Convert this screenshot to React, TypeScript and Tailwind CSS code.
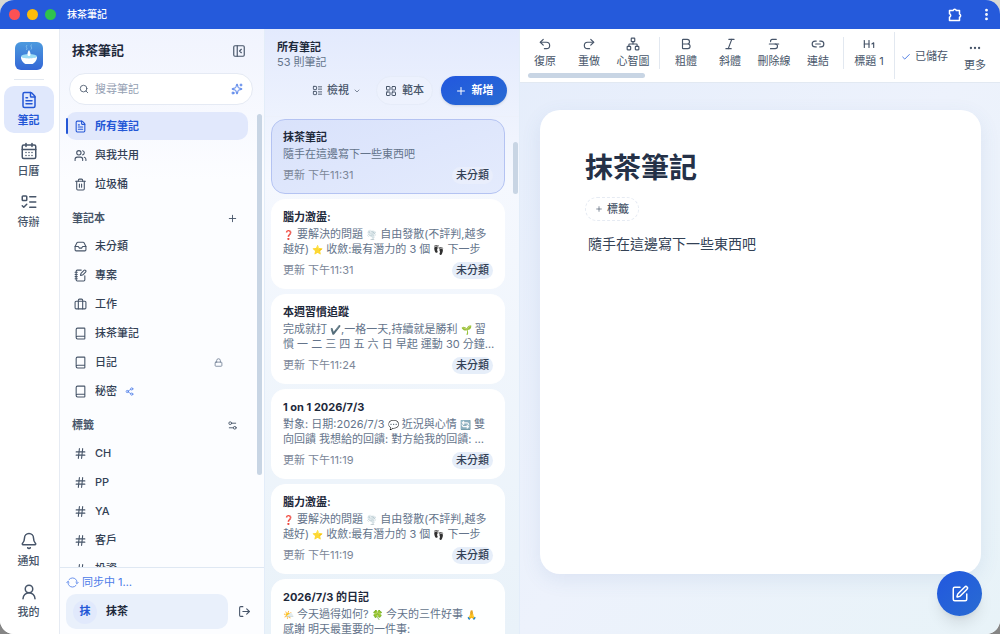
import {
  Bell, Bold, Book, Briefcase, CalendarDays, Check, ChevronDown, Ellipsis, EllipsisVertical, FileText,
  Hash, Heading1, Inbox, Italic, LayoutGrid, LayoutList, Link2, ListTodo, Lock, LogOut, Network,
  NotebookPen, PanelLeftClose, Plus, Redo2, Search, Settings2, Share2, Sparkles, SquarePen,
  Strikethrough, Trash2, Undo2, UserRound, Users,
} from 'lucide-react'
import { IoSyncOutline } from 'react-icons/io5'

type Note = { title: string, lines: string[], time: string, active?: boolean }

const brainstorm = [
  '❓ 要解決的問題 🌪️ 自由發散(不評判,越多',
  '越好) ⭐ 收斂:最有潛力的 3 個 👣 下一步',
]

const notes: Note[] = [
  { title: '抹茶筆記', lines: ['隨手在這邊寫下一些東西吧'], time: '下午11:31', active: true },
  { title: '腦力激盪:', lines: brainstorm, time: '下午11:31' },
  { title: '本週習慣追蹤', lines: ['完成就打 ✔️,一格一天,持續就是勝利 🌱 習', '慣 一 二 三 四 五 六 日 早起 運動 30 分鐘…'], time: '下午11:24' },
  { title: '1 on 1 2026/7/3', lines: ['對象: 日期:2026/7/3 💬 近況與心情 🔄 雙', '向回饋 我想給的回饋: 對方給我的回饋: …'], time: '下午11:19' },
  { title: '腦力激盪:', lines: brainstorm, time: '下午11:19' },
  { title: '2026/7/3 的日記', lines: ['🌤️ 今天過得如何? 🍀 今天的三件好事 🙏', '感謝 明天最重要的一件事:'], time: '下午11:10' },
]

const emojiPattern = /(\p{Extended_Pictographic}\uFE0F?)/u

// Emoji glyphs run larger than the text, so they get a smaller size
function EmojiText({ text }: { text: string }) {
  return (
    <>
      {text.split(emojiPattern).map((part, i) => {
        if (i % 2 === 0) return part
        const dark = part === '👣'
        return <span key={i} className={dark ? 'inline-block text-[9px] brightness-50 grayscale' : 'text-[9px]'}>{part}</span>
      })}
    </>
  )
}

function PuzzleIcon() {
  return (
    <svg width="16" height="16" viewBox="0 0 16 16" fill="none" stroke="currentColor" strokeWidth="1.5" strokeLinejoin="round">
      <path d="M2.500 3.500h3.600a1.700 1.700 0 0 1 3.200 0h3.200v3.600a1.700 1.700 0 0 1 0 3.200v3.200h-10v-3.300a1.800 1.800 0 0 0 0-3.400z" />
    </svg>
  )
}

function Logo() {
  return (
    <svg width="28" height="28" viewBox="0 0 28 28" className="shrink-0">
      <defs>
        <linearGradient id="logo" x1="0" y1="0" x2="0" y2="1">
          <stop offset="0" stopColor="#4c9ade" />
          <stop offset="1" stopColor="#3467d6" />
        </linearGradient>
      </defs>
      <rect width="28" height="28" rx="6" fill="url(#logo)" />
      <path d="M12 3c-2 2 1 3-.5 5M16.500 2.500c-2 2 1.500 3-.5 5" stroke="#8cc4ee" strokeWidth=".8" fill="none" />
      <ellipse cx="14" cy="14.500" rx="8" ry="2.500" fill="#9bdcf5" />
      <path d="M6 14.500c1 2.500 15 2.500 16 0 .3 3.500-2 6-4.500 7.500h-7C8 20.500 5.700 18 6 14.500z" fill="#fff" />
      <path d="M14 8c1 1.500 1.600 2.800 1.500 4.500a1.500 1.500 0 0 1-3 0c-.1-1.700.5-3 1.500-4.500z" fill="#fff" />
    </svg>
  )
}

function RailButton({ icon: Icon, label, active }: { icon: any, label: string, active?: boolean }) {
  return (
    <button
      className={`flex h-[47px] w-[50px] flex-col items-center justify-center gap-[3px] rounded-[10px] text-[11px] leading-[16px] ${active
          ? 'bg-[#e0e8fc] font-bold text-[#2457d6]'
          : 'font-medium text-[#475569]'
        }`}
    >
      <Icon size={18} strokeWidth={2} />
      {label}
    </button>
  )
}

function SideItem({ icon: Icon, label, active, shared, locked }: { icon: any, label: string, active?: boolean, shared?: boolean, locked?: boolean }) {
  return (
    <a
      href="#"
      className={`relative flex h-7 shrink-0 items-center rounded-[10px] pl-2 text-[11px] ${active
          ? 'bg-[#e1e8fc] font-bold text-[#2457d6]'
          : 'font-medium text-[#334155]'
        }`}
    >
      {active && <span className="absolute left-0 h-4 w-0.5 rounded-full bg-[#2457d6]" />}
      <Icon size={13} className={active ? '' : 'text-[#475569]'} />
      <span className="ml-2">{label}</span>
      {shared && <Share2 size={9} className="ml-2 text-[#4b7be8]" />}
      {locked && <Lock size={9} className="mr-[25px] ml-auto text-[#64748b]" />}
    </a>
  )
}

function SectionHeader({ label, icon: Icon }: { label: string, icon: any }) {
  return (
    <div className="mt-[7px] flex h-[25px] shrink-0 items-center justify-between pr-[10px] pl-[6px]">
      <h2 className="text-[11px] font-bold text-[#475569]">{label}</h2>
      <button aria-label={label} className="text-[#475569]"><Icon size={11} /></button>
    </div>
  )
}

function NoteCard({ note }: { note: Note }) {
  return (
    <article
      className={`shrink-0 rounded-[14px] border px-[11px] py-[9px] ${note.active
          ? 'border-[#b4c3f2] bg-linear-to-br from-[#d9e2fb] to-[#e4ebfd]'
          : 'border-white bg-white/95'
        }`}
    >
      <h3 className="text-[11px] leading-[16px] font-bold text-[#1e293b]">{note.title}</h3>
      <div className="mt-0.5 text-[11px] leading-[15px] text-[#64748b]">
        {note.lines.map(line => (
          <p key={line} className="h-[15px] whitespace-nowrap"><EmojiText text={line} /></p>
        ))}
      </div>
      <div className="mt-[5px] flex h-[17px] items-center justify-between text-[11px]">
        <span className="text-[#7b8698]">更新 {note.time}</span>
        <span className={`rounded-full px-1 leading-[17px] font-medium text-[#334155] ${note.active ? 'bg-[#e9eefc]' : 'bg-[#e6eef9]'}`}>未分類</span>
      </div>
    </article>
  )
}

function Tool({ icon: Icon, label }: { icon: any, label: string }) {
  return (
    <button className="flex w-11 shrink-0 flex-col items-center gap-0.5 text-[11px] leading-[16px] whitespace-nowrap text-[#475569]">
      <Icon size={14} />
      {label}
    </button>
  )
}

function TitleBar() {
  return (
    <header className="flex h-[29px] shrink-0 items-center bg-[#255adb] pr-[6px] pl-[9px] text-white">
      <div className="flex gap-[7px]">
        <span className="size-[11px] rounded-full bg-[#fb5154]" />
        <span className="size-[11px] rounded-full bg-[#fbbc09]" />
        <span className="size-[11px] rounded-full bg-[#2fc24c]" />
      </div>
      <span className="ml-[11px] text-[10px] font-medium">抹茶筆記</span>
      <div className="ml-auto flex items-center gap-4">
        <button aria-label="擴充功能"><PuzzleIcon /></button>
        <button aria-label="選單"><EllipsisVertical size={15} strokeWidth={2.5} /></button>
      </div>
    </header>
  )
}

function Rail() {
  return (
    <nav className="flex w-[60px] shrink-0 flex-col items-center border-r border-[#e6ebf3] bg-white pt-[13px] pr-0.5 pb-[9px]">
      <Logo />
      <div className="mt-[9px] mb-[6px] w-[30px] border-t border-[#e2e8f0]" />
      <div className="flex flex-col gap-1">
        <RailButton icon={FileText} label="筆記" active />
        <RailButton icon={CalendarDays} label="日曆" />
        <RailButton icon={ListTodo} label="待辦" />
      </div>
      <div className="mt-auto flex flex-col gap-1">
        <RailButton icon={Bell} label="通知" />
        <RailButton icon={UserRound} label="我的" />
      </div>
    </nav>
  )
}

function Sidebar() {
  return (
    <aside className="flex w-[204px] shrink-0 flex-col bg-linear-to-b from-[#f1f4fe] via-[#fcfdff] via-25% to-[#fcfdff]">
      <div className="flex h-11 shrink-0 items-center justify-between pr-[18px] pl-3">
        <h1 className="text-[13px] font-bold text-[#1e293b]">抹茶筆記</h1>
        <button aria-label="收合側邊欄" className="text-[#475569]"><PanelLeftClose size={14} /></button>
      </div>
      <div className="mx-[9px] mr-[11px] flex h-8 shrink-0 items-center rounded-full border border-[#e5eaf4] bg-white px-[9px]">
        <Search size={10} className="shrink-0 text-[#475569]" />
        <input aria-label="搜尋筆記" placeholder="搜尋筆記" className="ml-1.5 min-w-0 flex-1 text-[11px] outline-none placeholder:text-[#94a0b3]" />
        <button aria-label="AI 搜尋" className="text-[#4b7be8]"><Sparkles size={12} /></button>
      </div>
      <div className="flex min-h-0 flex-1 pt-[7px]">
        <div className="ml-[6px] flex min-w-0 flex-1 flex-col gap-px overflow-hidden">
          <SideItem icon={FileText} label="所有筆記" active />
          <SideItem icon={Users} label="與我共用" />
          <SideItem icon={Trash2} label="垃圾桶" />
          <SectionHeader label="筆記本" icon={Plus} />
          <SideItem icon={Inbox} label="未分類" />
          <SideItem icon={NotebookPen} label="專案" />
          <SideItem icon={Briefcase} label="工作" />
          <SideItem icon={Book} label="抹茶筆記" />
          <SideItem icon={Book} label="日記" locked />
          <SideItem icon={Book} label="秘密" shared />
          <SectionHeader label="標籤" icon={Settings2} />
          <SideItem icon={Hash} label="CH" />
          <SideItem icon={Hash} label="PP" />
          <SideItem icon={Hash} label="YA" />
          <SideItem icon={Hash} label="客戶" />
          <SideItem icon={Hash} label="投資" />
        </div>
        <div className="mr-0.5 ml-[9px] pt-0.5 pb-[92px]">
          <div className="h-full w-[5px] rounded-full bg-[#c8d5e4]" />
        </div>
      </div>
      <footer className="shrink-0 border-t border-[#dfe8f3] pt-[6px] pr-[13px] pb-[5px] pl-[6px]">
        <div className="flex items-center gap-[3px] text-[11px] leading-[16px] text-[#4b7be8]">
          <IoSyncOutline size={13} />
          同步中 1…
        </div>
        <div className="mt-1 flex items-center gap-[10px]">
          <button className="flex h-[35px] flex-1 items-center gap-[9px] rounded-[10px] bg-[#e9f0fb] px-[7px] text-[11px] font-bold text-[#1e293b]">
            <span className="flex size-6 items-center justify-center rounded-full bg-[#e1e9fc] text-[#2457d6]">抹</span>
            抹茶
          </button>
          <button aria-label="登出" className="text-[#475569]"><LogOut size={13} /></button>
        </div>
      </footer>
    </aside>
  )
}

function NoteList() {
  return (
    <section className="flex w-64 shrink-0 flex-col border-x border-[#e3edf9] bg-linear-to-b from-[#e3eafd] via-[#f5f8fe] via-25% to-[#e9f2f9]">
      <div className="shrink-0 border-b border-[#edf1fb] pt-[11px] pr-3 pb-[11px] pl-3">
        <h2 className="text-[11px] leading-[15px] font-bold text-[#1e293b]">所有筆記</h2>
        <p className="text-[11px] leading-[15px] text-[#64748b]">53 則筆記</p>
        <div className="mt-[6px] flex justify-end gap-2 text-[11px] font-medium text-[#475569]">
          <button className="flex h-[29px] items-center gap-1 rounded-full px-[7px]">
            <LayoutList size={11} />
            檢視
            <ChevronDown size={8} />
          </button>
          <button className="flex h-[29px] items-center gap-[5px] rounded-full border border-[#e6ecf9] bg-[#f0f4fd]/50 px-2">
            <LayoutGrid size={12} />
            範本
          </button>
          <button className="flex h-[29px] w-[66px] items-center justify-center gap-[5px] rounded-full bg-linear-to-br from-[#2257df] to-[#2a6bd2] font-bold text-white shadow-sm">
            <Plus size={12} />
            新增
          </button>
        </div>
      </div>
      <div className="flex min-h-0 flex-1 pt-0.5">
        <div className="ml-[6px] flex w-[234px] flex-col gap-[5px] overflow-hidden">
          {notes.map((note, i) => <NoteCard key={i} note={note} />)}
        </div>
        <div className="mt-[23px] ml-2 h-[52px] w-[5px] rounded-full bg-[#c8d5e4]" />
      </div>
    </section>
  )
}

function Toolbar() {
  return (
    <div className="flex h-[54px] shrink-0 border-b border-[#e2e9f2] bg-white">
      <div className="flex min-w-0 flex-1 flex-col overflow-hidden pt-2 pl-[3px]">
        <div className="flex">
          <Tool icon={Undo2} label="復原" />
          <Tool icon={Redo2} label="重做" />
          <Tool icon={Network} label="心智圖" />
          <div className="mx-1 h-8 w-px shrink-0 bg-[#e2e8f0]" />
          <Tool icon={Bold} label="粗體" />
          <Tool icon={Italic} label="斜體" />
          <Tool icon={Strikethrough} label="刪除線" />
          <Tool icon={Link2} label="連結" />
          <div className="mx-[3px] h-8 w-px shrink-0 bg-[#e2e8f0]" />
          <Tool icon={Heading1} label="標題 1" />
        </div>
        <div className="mt-1 ml-[5px] h-[5px] w-[117px] shrink-0 rounded-full bg-[#c8d5e4]" />
      </div>
      <div className="my-[3px] flex shrink-0 items-center border-l border-[#e2e8f0] pt-0.5 pr-[3px] pl-[6px] text-[11px] text-[#475569]">
        <Check size={10} className="text-[#2f66e0]" />
        <span className="ml-1">已儲存</span>
        <div className="ml-[5px]">
          <Tool icon={Ellipsis} label="更多" />
        </div>
      </div>
    </div>
  )
}

function Editor() {
  return (
    <main className="relative flex min-w-0 flex-1 flex-col bg-linear-to-br from-[#e5edfb] via-[#edf2fc] to-[#e8f3f8]">
      <Toolbar />
      <article className="mr-[19px] mb-[60px] ml-5 mt-[27px] flex-1 rounded-[20px] bg-white px-[45px] pt-[39px] shadow-[0_6px_20px_rgba(71,105,170,0.10)]">
        <h1 className="text-[28px] leading-[38px] font-bold text-[#253147]">抹茶筆記</h1>
        <button className="mt-[10px] flex h-6 items-center gap-1 rounded-full border border-dashed border-[#e6ebf3] px-[9px] text-[11px] font-medium text-[#475569]">
          <Plus size={8} />
          標籤
        </button>
        <p className="mt-3 pl-[3px] text-[14px] leading-[22px] text-[#334155]">隨手在這邊寫下一些東西吧</p>
      </article>
      <button aria-label="編輯" className="absolute right-[18px] bottom-[18px] flex size-[45px] items-center justify-center rounded-full bg-linear-to-br from-[#2257df] to-[#2a6bd2] text-white shadow-lg">
        <SquarePen size={18} />
      </button>
    </main>
  )
}

function App(): React.JSX.Element {
  return (
    <div className="h-screen bg-linear-to-b from-[#d8d9d4] to-[#858585] font-[Inter,'Noto_Sans_CJK_TC',sans-serif]">
      <div className="flex h-full flex-col overflow-hidden rounded-[14px] bg-white">
        <TitleBar />
        <div className="flex min-h-0 flex-1">
          <Rail />
          <Sidebar />
          <NoteList />
          <Editor />
        </div>
      </div>
    </div>
  )
}

export default App
